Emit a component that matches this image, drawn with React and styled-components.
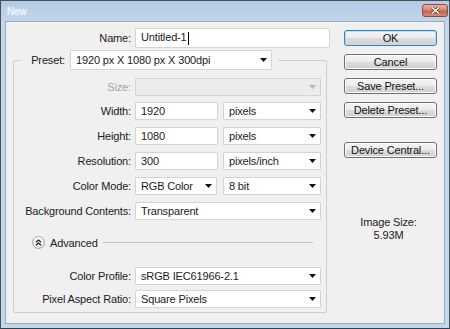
import React from "react"
import styled, { createGlobalStyle } from "styled-components"

const GlobalStyle = createGlobalStyle`
  html, body {
    margin: 0;
    padding: 0;
  }
  body {
    font-family: "Liberation Sans", Arial, sans-serif;
    font-size: 11px;
    letter-spacing: -0.15px;
    color: #1b1b1b;
  }
`

const Window = styled.div`
  width: 450px;
  height: 329px;
  box-sizing: border-box;
  display: flex;
  flex-direction: column;
  border: 1px solid #46525e;
  border-bottom-color: #2c4554;
  background: linear-gradient(to bottom, #b3cbe4 0, #c3d6ea 22px, #c4d7ea 100%);
`

const TitleBar = styled.div`
  height: 20px;
  flex-shrink: 0;
  display: flex;
  align-items: flex-start;
`

const Title = styled.span`
  margin: 4px 0 0 6px;
  font-size: 10px;
  line-height: 13px;
  color: #f3f7fb;
  text-shadow: 0 0 2px rgba(255, 255, 255, 0.7);
`

const CloseButton = styled.div`
  margin: 3px 1px 0 auto;
  width: 26px;
  height: 13px;
  box-sizing: border-box;
  border: 1px solid #8a4a40;
  border-radius: 3px;
  background: linear-gradient(to bottom, #e9b0a4 0%, #d8877a 45%, #c4604f 55%, #d88a78 100%);
  display: flex;
  align-items: center;
  justify-content: center;
`

const Body = styled.div`
  flex: 1;
  margin: 0 4px 4px;
  border: 1px solid #9aabbd;
  background: #f0f0f0;
  display: flex;
`

const FormColumn = styled.div`
  width: 338px;
  display: flex;
  flex-direction: column;
`

const Row = styled.div`
  display: flex;
  align-items: center;
  gap: 4px;
  height: ${p => p.$h || 18}px;
  margin-top: ${p => p.$top || 0}px;
`

const Label = styled.span`
  width: ${p => p.$w}px;
  flex-shrink: 0;
  text-align: right;
  white-space: nowrap;
  color: ${p => (p.$disabled ? "#a3a3a3" : "#1b1b1b")};
`

const Controls = styled.div`
  display: flex;
  gap: ${p => p.$gap || 5}px;
`

const Field = styled.div`
  width: ${p => p.$w}px;
  height: ${p => p.$h || 18}px;
  box-sizing: border-box;
  border: 1px solid #d4d4d4;
  border-radius: 1px;
  background: ${p => (p.$disabled ? "#ececec" : "#ffffff")};
  padding: 0 4px 0 5px;
  display: flex;
  align-items: center;
  justify-content: space-between;
  white-space: nowrap;
  overflow: hidden;
`

const Caret = styled.span`
  display: inline-block;
  width: 1px;
  height: 13px;
  margin-left: 1px;
  background: #000;
  vertical-align: middle;
`

const GroupBox = styled.fieldset`
  margin: 2px 0 0 7px;
  padding: 8px 0 4px 0;
  width: 314px;
  min-width: 0;
  box-sizing: border-box;
  border: 1px solid #cdcdcd;
  border-radius: 2px;
  display: flex;
  flex-direction: column;
`

const Legend = styled.legend`
  margin-left: 7px;
  padding: 0 6px 0 0;
  height: 20px;
  display: flex;
  align-items: center;
  gap: 5px;
`

const AdvancedRow = styled.div`
  margin: 16px 13px 0 18px;
  height: 13px;
  display: flex;
  align-items: center;
`

const RoundToggle = styled.div`
  width: 13px;
  height: 13px;
  box-sizing: border-box;
  border: 1px solid #a5a5a5;
  border-radius: 50%;
  background: linear-gradient(to bottom, #ffffff, #e2e2e2);
  display: flex;
  align-items: center;
  justify-content: center;
`

const AdvancedText = styled.span`
  margin-left: 5px;
`

const Rule = styled.div`
  flex: 1;
  height: 1px;
  margin-left: 5px;
  background: #c4c4c4;
`

const SideColumn = styled.div`
  width: 93px;
  padding-top: 8px;
  display: flex;
  flex-direction: column;
`

const PushButton = styled.div`
  height: 16px;
  margin-top: ${p => p.$top || 0}px;
  box-sizing: border-box;
  border: 1px solid ${p => (p.$default ? "#3c7fb1" : "#707070")};
  border-radius: 3px;
  background: linear-gradient(to bottom, #f4f4f4 0%, #ececec 50%, #dedede 50%, #d0d0d0 100%);
  box-shadow: ${p => (p.$default ? "inset 0 0 0 1px #b5e0f6" : "inset 0 0 0 1px #fafafa")};
  display: flex;
  align-items: center;
  justify-content: center;
  color: #111;
`

const ImageSize = styled.div`
  margin-top: 58px;
  padding-right: 4px;
  text-align: center;
  line-height: 13px;
`

const Arrow = ({ disabled }) => (
  <svg width="7" height="4" viewBox="0 0 7 4">
    <path d="M0 0H7L3.5 4Z" fill={disabled ? "#b5b5b5" : "#111"} />
  </svg>
)

const Select = ({ w, h, value, disabled }) => (
  <Field $w={w} $h={h} $disabled={disabled}>
    <span>{value}</span>
    <Arrow disabled={disabled} />
  </Field>
)

export default function App() {
  return (
    <>
      <GlobalStyle />
      <Window>
        <TitleBar>
          <Title>New</Title>
          <CloseButton>
            <svg width="9" height="7" viewBox="0 0 9 7">
              <path d="M1 0.5L8 6.5M8 0.5L1 6.5" stroke="#5a2a24" strokeWidth="2.6" />
              <path d="M1 0.5L8 6.5M8 0.5L1 6.5" stroke="#ffffff" strokeWidth="1.5" />
            </svg>
          </CloseButton>
        </TitleBar>
        <Body>
          <FormColumn>
            <Row $h={20} $top={6}>
              <Label $w={125}>Name:</Label>
              <Field $w={195} $h={20}>
                <span>Untitled-1<Caret /></span>
              </Field>
            </Row>
            <GroupBox>
              <Legend>
                <Label $w={44}>Preset:</Label>
                <Select w={202} h={20} value="1920 px X 1080 px X 300dpi" />
              </Legend>
              <Row>
                <Label $w={117} $disabled>Size:</Label>
                <Select w={186} value="" disabled />
              </Row>
              <Row $top={6}>
                <Label $w={117}>Width:</Label>
                <Controls>
                  <Field $w={83}>1920</Field>
                  <Select w={98} value="pixels" />
                </Controls>
              </Row>
              <Row $top={7}>
                <Label $w={117}>Height:</Label>
                <Controls>
                  <Field $w={83}>1080</Field>
                  <Select w={98} value="pixels" />
                </Controls>
              </Row>
              <Row $top={7}>
                <Label $w={117}>Resolution:</Label>
                <Controls>
                  <Field $w={83}>300</Field>
                  <Select w={98} value="pixels/inch" />
                </Controls>
              </Row>
              <Row $top={7}>
                <Label $w={117}>Color Mode:</Label>
                <Controls $gap={6}>
                  <Select w={82} value="RGB Color" />
                  <Select w={98} value="8 bit" />
                </Controls>
              </Row>
              <Row $top={7}>
                <Label $w={117}>Background Contents:</Label>
                <Select w={186} value="Transparent" />
              </Row>
              <AdvancedRow>
                <RoundToggle>
                  <svg width="7" height="7" viewBox="0 0 7 7">
                    <path d="M1 3.2L3.5 1L6 3.2M1 6.2L3.5 4L6 6.2" stroke="#222" strokeWidth="1.2" fill="none" />
                  </svg>
                </RoundToggle>
                <AdvancedText>Advanced</AdvancedText>
                <Rule />
              </AdvancedRow>
              <Row $top={18}>
                <Label $w={117}>Color Profile:</Label>
                <Select w={186} value="sRGB IEC61966-2.1" />
              </Row>
              <Row $top={5}>
                <Label $w={117}>Pixel Aspect Ratio:</Label>
                <Select w={186} value="Square Pixels" />
              </Row>
            </GroupBox>
          </FormColumn>
          <SideColumn>
            <PushButton $default>OK</PushButton>
            <PushButton $top={8}>Cancel</PushButton>
            <PushButton $top={8}>Save Preset...</PushButton>
            <PushButton $top={8}>Delete Preset...</PushButton>
            <PushButton $top={24}>Device Central...</PushButton>
            <ImageSize>
              <div>Image Size:</div>
              <div>5.93M</div>
            </ImageSize>
          </SideColumn>
        </Body>
      </Window>
    </>
  )
}
